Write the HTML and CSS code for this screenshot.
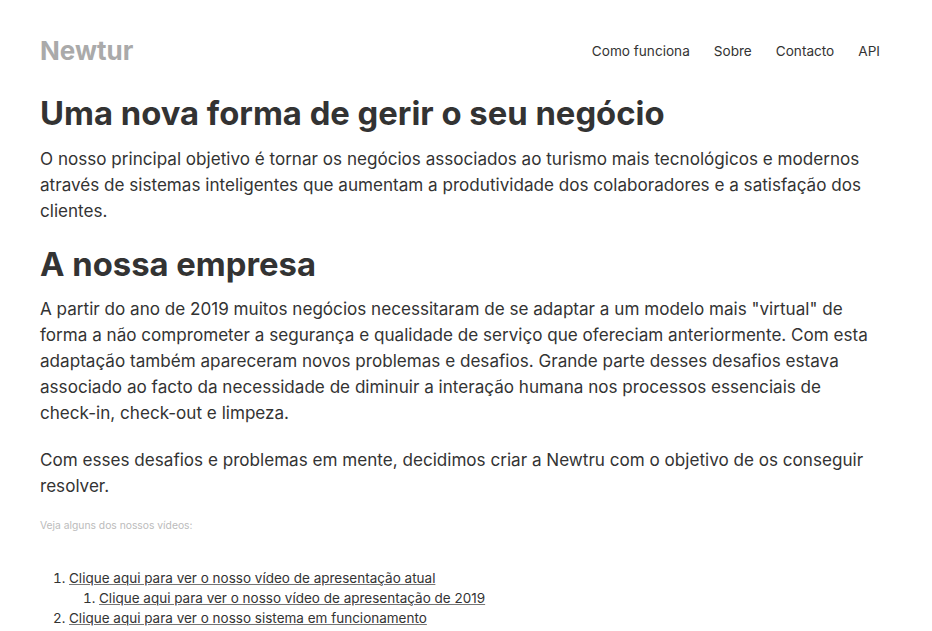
FILE: index.html
```html
<!DOCTYPE html>
<html lang="pt">
<head>
<meta charset="utf-8">
<title>Newtur</title>
<link rel="stylesheet" href="styles.css">
</head>
<body>
<div class="page">
  <header class="header">
    <a class="logo" href="#">Newtur</a>
    <nav class="nav">
      <a href="#">Como funciona</a>
      <a href="#">Sobre</a>
      <a href="#">Contacto</a>
      <a href="#">API</a>
    </nav>
  </header>
  <main class="content">
    <h1 class="title">Uma nova forma de gerir o seu negócio</h1>
    <p class="text">O nosso principal objetivo é tornar os negócios associados ao turismo mais tecnológicos e modernos através de sistemas inteligentes que aumentam a produtividade dos colaboradores e a satisfação dos clientes.</p>
    <h2 class="title title-2">A nossa empresa</h2>
    <p class="text">A partir do ano de 2019 muitos negócios necessitaram de se adaptar a um modelo mais "virtual" de forma a não comprometer a segurança e qualidade de serviço que ofereciam anteriormente. Com esta adaptação também apareceram novos problemas e desafios. Grande parte desses desafios estava associado ao facto da necessidade de diminuir a interação humana nos processos essenciais de check-in, check-out e limpeza.</p>
    <p class="text">Com esses desafios e problemas em mente, decidimos criar a Newtru com o objetivo de os conseguir resolver.</p>
    <p class="small">Veja alguns dos nossos vídeos:</p>
    <ol class="videos">
      <li><a href="#">Clique aqui para ver o nosso vídeo de apresentação atual</a>
        <ol class="videos sub">
          <li><a href="#">Clique aqui para ver o nosso vídeo de apresentação de 2019</a></li>
        </ol>
      </li>
      <li><a href="#">Clique aqui para ver o nosso sistema em funcionamento</a></li>
    </ol>
  </main>
</div>
</body>
</html>
```
FILE: styles.css
```css
* { box-sizing: border-box; }
body {
  margin: 0;
  font-family: Inter, "Noto Sans", sans-serif;
  color: #333;
  background: #fff;
}
.page {
  padding: 0 52px 0 40px;
}
.header {
  display: flex;
  justify-content: space-between;
  align-items: center;
  height: 100px;
}
.logo {
  font-size: 26px;
  font-weight: 700;
  color: #aaa;
  text-decoration: none;
}
.nav {
  display: flex;
  gap: 24px;
  padding-top: 2px;
}
.nav a {
  font-size: 13.6px;
  color: #333;
  text-decoration: none;
}
.content {
  display: flow-root;
  margin-top: -7px;
}
.title {
  margin: 0;
  font-size: 32.8px;
  font-weight: 700;
  line-height: 40px;
  color: #333;
}
.title-2 {
  margin-top: 20px;
}
.text {
  margin: 0;
  font-size: 17.1px;
  line-height: 26px;
}
.title + .text {
  margin-top: 13px;
}
.title-2 + .text {
  margin-top: 12px;
}
.text + .text {
  margin-top: 21px;
}
.small {
  font-size: 10.3px;
  line-height: 16px;
  color: #bbb;
  margin: 18px 0 0;
}
.videos {
  margin: 35px 0 0;
  padding-left: 29px;
  font-size: 13.5px;
  line-height: 20px;
}
.videos a {
  color: #333;
  text-decoration-color: #777;
}
.sub {
  margin: 0;
  padding-left: 30px;
}
```
